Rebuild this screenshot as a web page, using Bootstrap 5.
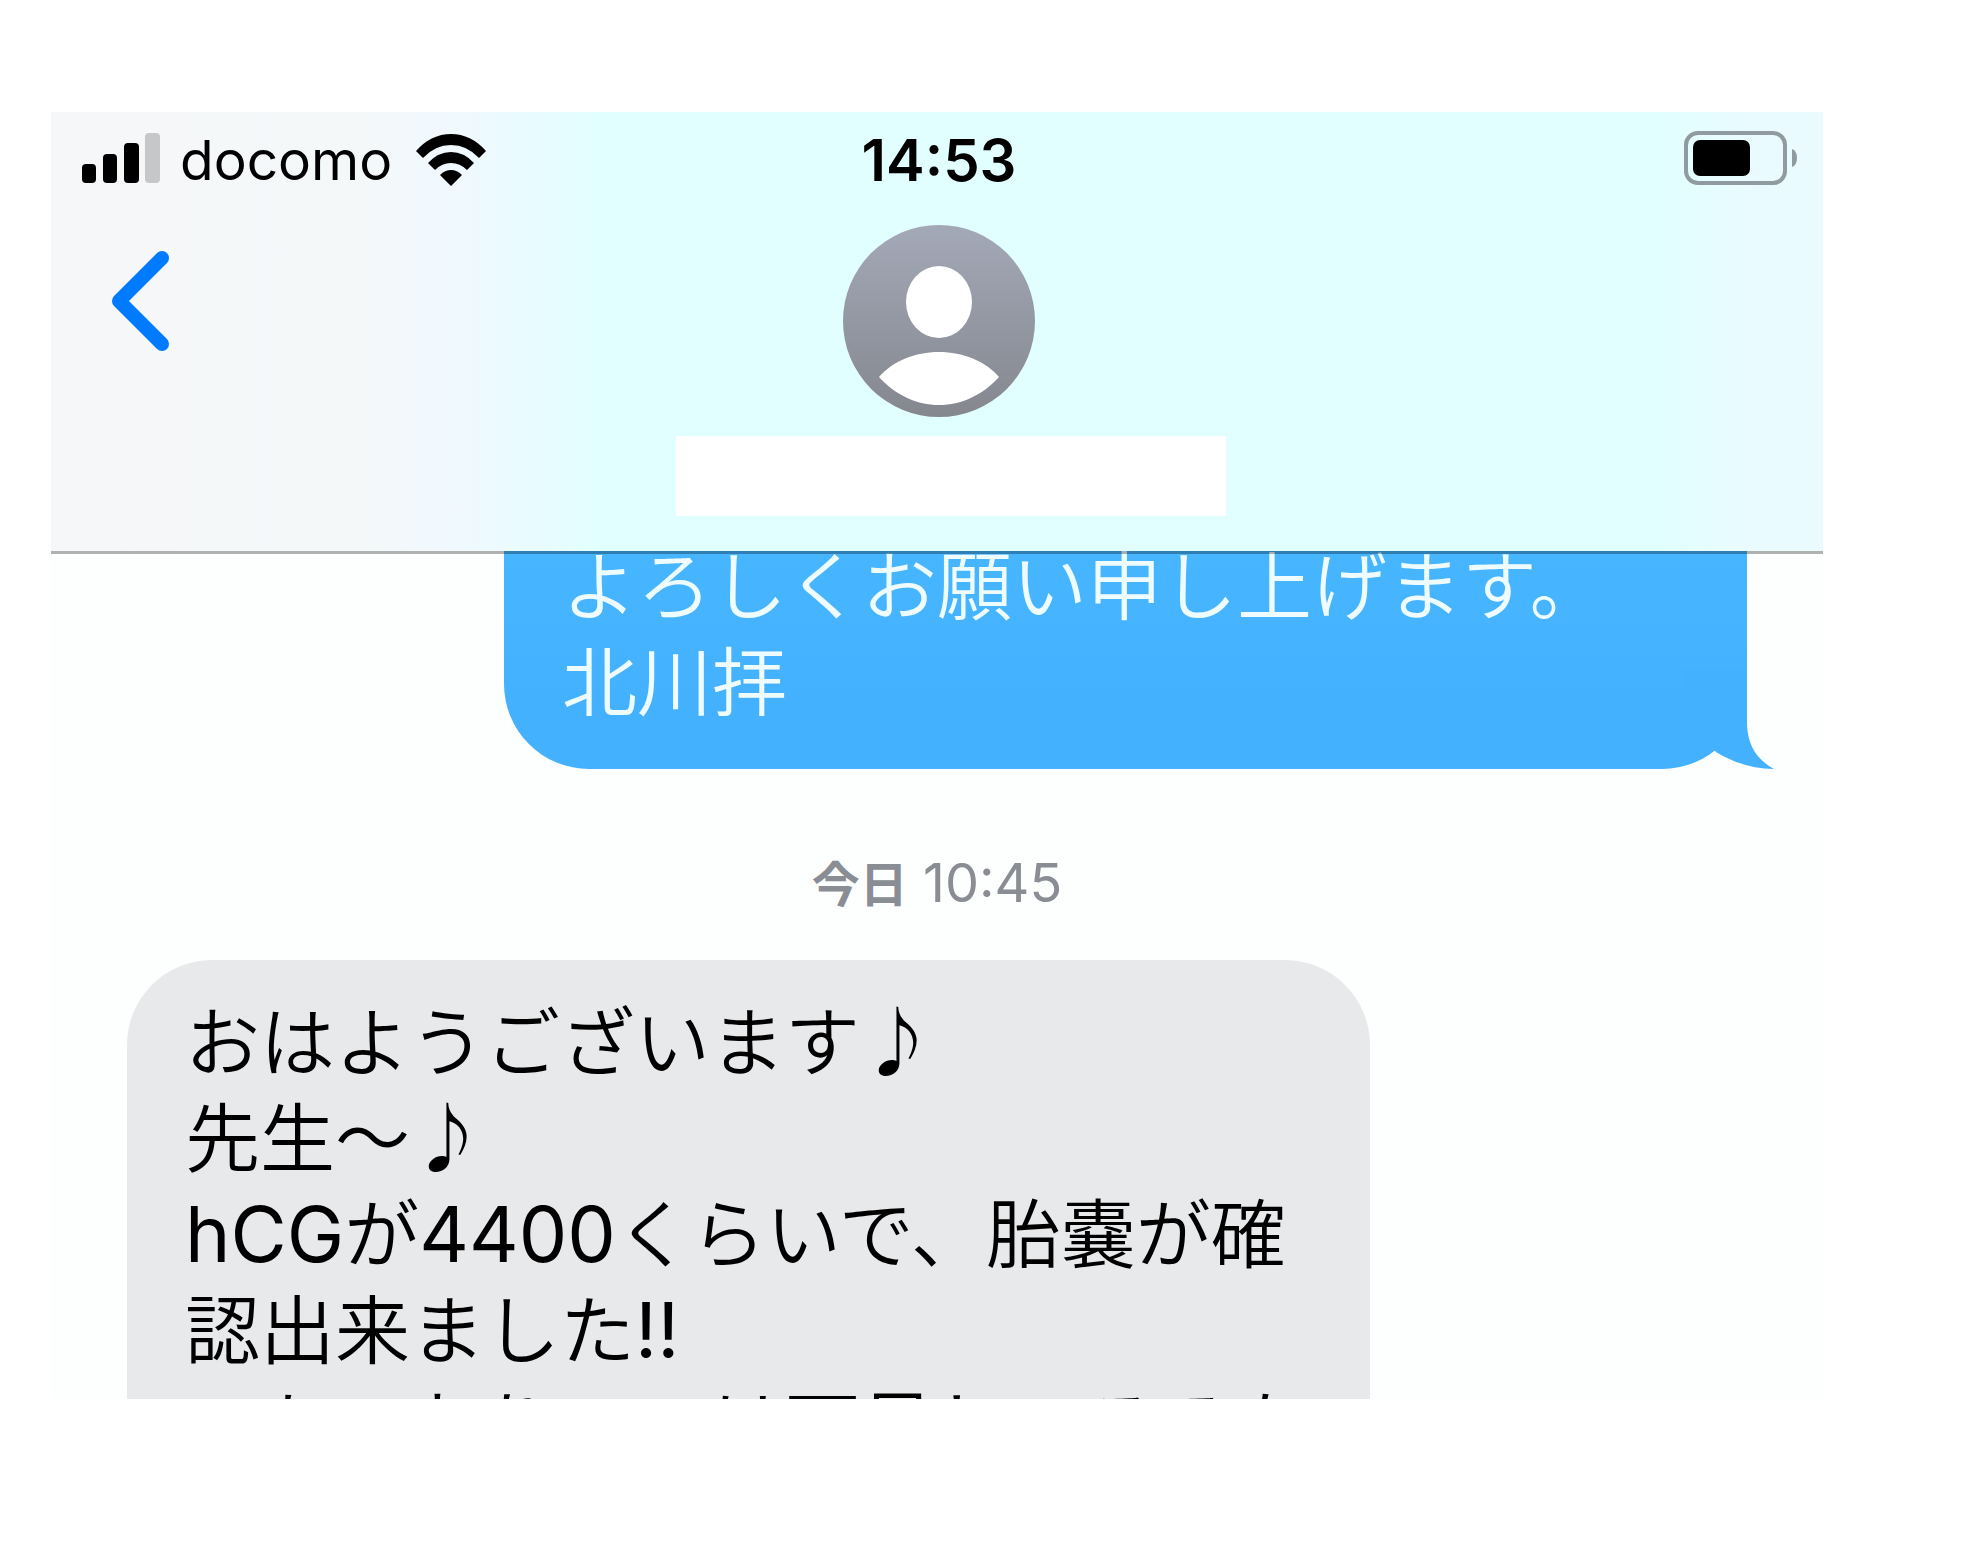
<!DOCTYPE html>
<html lang="ja">
<head>
<meta charset="utf-8">
<meta name="viewport" content="width=device-width, initial-scale=1">
<title>メッセージ</title>
<link href="https://cdn.jsdelivr.net/npm/bootstrap@5.3.0/dist/css/bootstrap.min.css" rel="stylesheet">
<style>
  body { background: #fff; color: #000; font-family: Inter, "Noto Sans CJK JP", sans-serif; }
  .phone { margin: 112px 154px 0 51px; background: #fdfefe; }
  .top-bar { padding: 16px 26px 35px 30px; border-bottom: 3px solid rgba(0, 0, 0, .3);
    background: linear-gradient(90deg, #f6f7f9 0%, #f4f8f9 18%, #f0f9ff 23%, #e9fbff 27%, #e2ffff 31%, #e2ffff 91%, #eafbff 96%, #eafaff 100%);
    background-clip: padding-box; }
  .bar-side { flex: 1 1 0; }
  .bars { margin-bottom: 4px; }
  .carrier { font-size: 55px; line-height: 64px; margin: 0 24px 0 19px; }
  .clock { font-size: 58px; line-height: 64px; font-weight: 600; }
  .nav-row { margin-top: 33px; }
  .back-btn { border: 0; background: none; padding: 0; line-height: 0; margin: 26px 0 0 30px; }
  .contact-name { width: 550px; height: 80px; background: #fff; margin: 19px auto 0; }
  .name-row { padding-left: 23px; }
  .talk { margin-top: -3px; padding: 0 76px; height: 848px; overflow: hidden; }
  .bubble { font-weight: 350; font-size: 75px; line-height: 96px; width: 1243px; max-width: 100%; padding: 35px 58px; }
  .latin { font-weight: 400; font-size: 77px; line-height: 1; }
  .sent { color: #effcff; background: linear-gradient(#47b6ff, #44b1ff 75%); border-radius: 0 0 85px 85px;
    margin-top: -12px; padding-top: 0; padding-bottom: 38px; }
  .tail { right: -27px; bottom: 0; }
  .stamp { color: #8a8d93; line-height: 64px; font-size: 54px; margin: 82px 0 43px; }
  .stamp b { font-size: 48px; }
  .received { background: #e8e9eb; border-radius: 85px 85px 0 0; }
</style>
</head>
<body>
<main class="phone">
  <header class="top-bar position-relative z-1">
    <div class="d-flex align-items-center">
      <div class="bar-side d-flex align-items-center">
        <svg class="bars" width="80" height="50" viewBox="0 0 80 50" aria-hidden="true"><rect x="1" y="31" width="14" height="19" rx="4"/><rect x="22" y="21" width="14" height="29" rx="4"/><rect x="43" y="10" width="15" height="40" rx="4"/><rect x="64" y="0" width="15" height="50" rx="4" fill="#c6c7c9"/></svg>
        <span class="carrier">docomo</span>
        <svg width="70" height="52" viewBox="0 0 70 52" aria-hidden="true"><path d="M0 17Q15 0 35 0T70 17L63 24Q51 11 35 11T7 24ZM12 29Q22 18 35 18T58 29L51 36Q44 29 35 29T19 36ZM24 41Q29 36 35 36T46 41L35 52Z"/></svg>
      </div>
      <span class="clock">14:53</span>
      <div class="bar-side d-flex justify-content-end">
        <svg class="bars" width="113" height="54" viewBox="0 0 113 54" aria-hidden="true"><rect x="2" y="2" width="99" height="50" rx="12" fill="none" stroke="#8f9ba1" stroke-width="4"/><rect x="9" y="9" width="57" height="36" rx="7"/><path d="M108 18Q113 20 113 27T108 36Z" fill="#8f9ba1"/></svg>
      </div>
    </div>
    <div class="nav-row d-flex align-items-start">
      <div class="bar-side">
        <button class="back-btn" type="button" aria-label="戻る"><svg width="58" height="100" viewBox="0 0 58 100"><path d="M51 7L8 50L51 93" fill="none" stroke="#007bff" stroke-width="14" stroke-linecap="round" stroke-linejoin="round"/></svg></button>
      </div>
      <svg width="192" height="192" viewBox="0 0 192 192" aria-hidden="true">
        <defs><linearGradient id="face" x1="0" y1="0" x2="0" y2="1"><stop offset="0" stop-color="#a4a9b8"/><stop offset="1" stop-color="#84878e"/></linearGradient></defs>
        <circle cx="96" cy="96" r="96" fill="url(#face)"/><ellipse cx="96" cy="77" rx="33" ry="36" fill="#fff"/>
        <path d="M36 152C50 136 72 127 96 127S142 136 156 152C140 170 118 180 96 180S52 170 36 152Z" fill="#fff"/>
      </svg>
      <div class="bar-side"></div>
    </div>
    <div class="name-row"><div class="contact-name"></div></div>
  </header>
  <section class="talk">
    <div class="bubble sent position-relative ms-auto">よろしくお願い申し上げます。<br>北川拝
      <svg class="tail position-absolute" width="110" height="100" viewBox="0 0 110 100" aria-hidden="true"><path d="M83 0V56C84 76 92 90 110 100C90 100 70 94 52 83L20 40V0Z" fill="#44b1ff"/></svg>
    </div>
    <div class="stamp text-center"><b>今日</b> 10:45</div>
    <div class="bubble received">おはようございます♪<br>先生〜♪<br><span class="latin">hCG</span>が<span class="latin">4400</span>くらいで、胎嚢が確認出来ました<span class="latin">!!</span><br>いちいおりいいは下見しいるろな</div>
  </section>
</main>
<script src="https://cdn.jsdelivr.net/npm/bootstrap@5.3.0/dist/js/bootstrap.bundle.min.js"></script>
</body>
</html>
